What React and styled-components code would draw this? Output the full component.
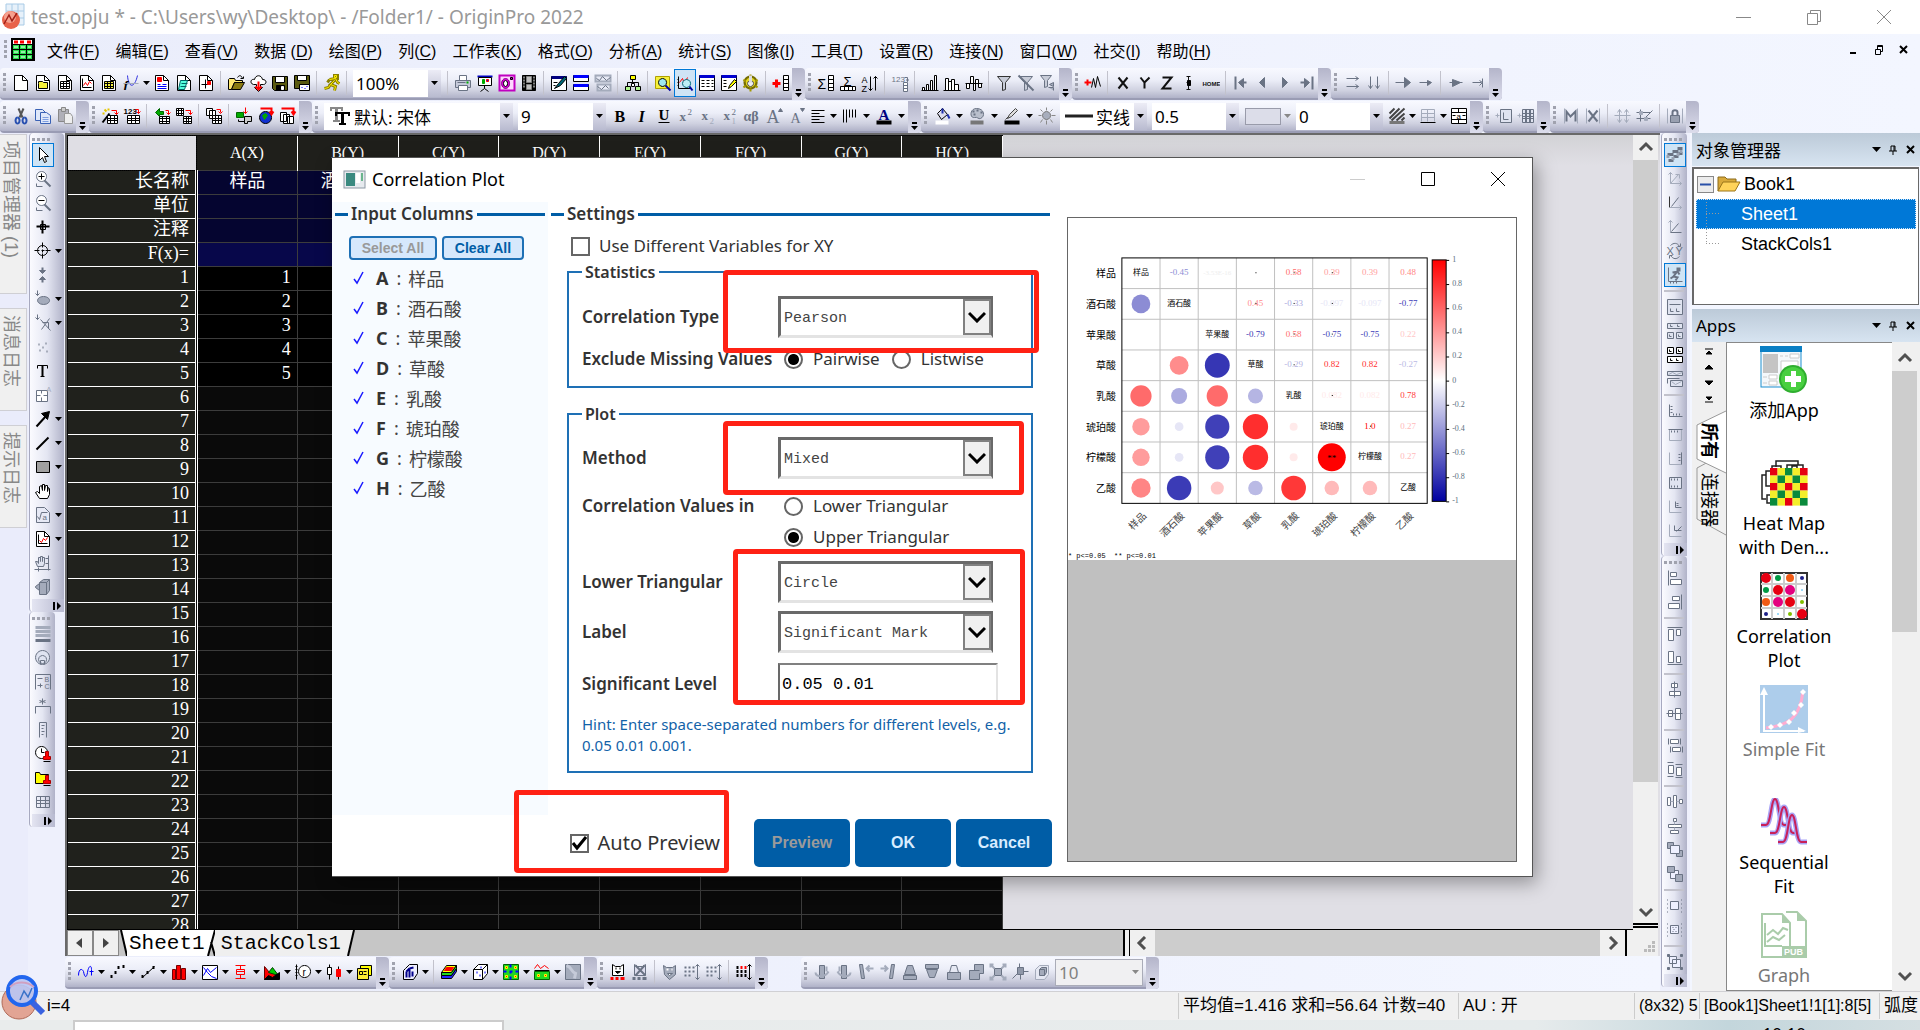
import React, { useState } from 'react';
import styled, { createGlobalStyle, css } from 'styled-components';

const ui = `"Noto Sans", "Noto Sans CJK SC", sans-serif`;
const cjk = `"Liberation Sans", "Noto Sans CJK SC", sans-serif`;
const serif = `"Liberation Serif", "Noto Sans CJK SC", serif`;
const mono = `"Liberation Mono", "Noto Sans CJK SC", monospace`;

const K = '#000';
const W = '#fff';
const G = '#6a7384';
const L = '#a4abbb';
const R = '#f00';
const B = '#00f';
const Y = '#f5f03a';
const N = 'none';

// every entry is [path, fill, stroke, stroke width] or ['text', string, x, y, size, fill, weight, style, family]
const page = ['M2 1H10L15 6V16H2Z', W, K];
const fold = ['M10 1V6H15', N, K];
const pageG = ['M2 1H10L15 6V16H2Z', '#e6e9f5', G];
const grid = (x, y, w, h, fill = W, stroke = K) => [
  `M${x} ${y}h${w}v${h}h-${w}zM${x} ${y + Math.round(h / 3)}h${w}M${x} ${y + Math.round((2 * h) / 3)}h${w}M${x + Math.round(w / 3)} ${y}v${h}M${x + Math.round((2 * w) / 3)} ${y}v${h}`,
  fill,
  stroke,
];

const icons = {
  blank: [page, fold],
  docFolder: [page, fold, ['M4 9V14H13V8H9L8 7H4Z', Y, K]],
  docGrid: [page, fold, grid(4, 7, 9, 7)],
  docPlot: [page, fold, ['M4 4V13H13', N, K], ['M5 11L7 8L9 11L11 7L13 9', N, R]],
  docMatrix: [page, fold, grid(4, 7, 9, 7, Y)],
  func: [['M5 1C6 14 12 14 15 1', N, '#3030e0'], ['text', 'f', 1, 15, 13, K, 700, 'italic'], ['M1 9h15', N, L]],
  docText: [page, fold, ['M4 3h4v4h-4z', R, R], ['M4 10h3M9 10h4M4 12h9M4 14h9', N, B]],
  docLayers: [page, fold, ['M5 6h7l-3 9h-6z', '#5fd', '#066'], ['M6 9h6M5 12h6', N, '#066']],
  docMark: [page, fold, ['M8 5v9M4 10h9', N, K], ['M10 7h3v3h-3z', R, R]],
  open: [['M1 5V15H4L7 8H15V6H8L7 4H2Z', '#ffe870', K], ['M4 15H13L17 8H7Z', '#8a7a10', K], ['M10 3C12 0 14 1 15 4M13 4h3v-2', N, K]],
  cloud: [['M4 10C0 9 1 4 5 5C6 0 12 0 13 5C18 5 17 10 14 10H11V13H13L9 17L5 13H7V10Z', W, K], ['M9 7V15M6 12L9 15L12 12', N, R, 2]],
  save: [['M1 2H16V16H3L1 14Z', '#5a5a10', K], ['M4 2H13V8H4Z', W, K], ['M5 11H13V16H5Z', K, K], ['M10 12h2v3h-2z', W, W]],
  saveAs: [['M1 1H16V12H13V14H1Z', '#5a5a10', K], ['M4 1H13V6H4Z', W, K], ['M6 10H16V16H6Z', W, K], ['M8 13h1M11 14h1M13 12h1', N, B]],
  runner: [['M11 1h3v3h-3zM6 5L12 4L14 8L16 9M11 6L7 10L12 12L11 16M7 10L5 13L1 14M6 5L4 8', N, '#8a8000', 3], ['M11 1h2v2h-2zM6 5L12 4L14 8L16 9M11 6L7 10L12 12L11 16M7 10L5 13L1 14', N, '#ffee00', 1]],
  print: [['M5 6V1H12V6', W, G], ['M1 6H16V13H1Z', '#c6cada', G], ['M4 11H13V16H4Z', W, G], ['M3 8h8', N, G], ['M12 8h2', N, '#0a0', 2]],
  board: [['M1 2H16', N, '#0000c0', 2], ['M2 3H15V11H2Z', W, K], ['M8 11V14L4 17M8 14L12 17', N, K], ['M6 5h2v4h-2z', '#0a0', '#0a0'], ['M10 5h2v2h-2z', B, R]],
  cam: [['M1 1H16V16H1Z', '#ffd6ff', '#c000c0', 2], ['M7 4a4 5 0 1 0 .1 0', '#e000e0', '#800080'], ['M7 6a2 3 0 1 0 .1 0', '#fff', K], ['M12 3h2v2h-2z', '#c000c0', K]],
  film: [['M2 1H15V16H2Z', K, K], ['M6 2h5v6h-5zM6 10h5v5h-5z', '#c0c0c0', '#808080'], ['M3 3h1M3 6h1M3 9h1M3 12h1M13 3h1M13 6h1M13 9h1M13 12h1', N, W, 2]],
  edit: [['M1 2H16V16H1Z', W, K], ['M1 3H16', N, '#000080', 3], ['M4 14L8 9L14 2L16 4L10 11Z', '#067', K], ['M3 8h4M3 11h2', N, K]],
  winRows: [['M1 1H16V7H1ZM1 10H16V16H1Z', W, K], ['M1 2H16M1 11H16', N, B, 3]],
  winWave: [['M1 1H16V7H1ZM3 10H16V16H3Z', '#e6e9f5', L, 2], ['M2 4L5 6L8 2L12 6L16 3M3 12L7 15L11 11L14 14', N, G]],
  org: [['M6 1H11V5H6Z', '#ff0', K], ['M8 5V8M3 12V8H14V12', N, K], ['M1 12H6V16H1ZM11 12H16V16H11Z', '#aef58a', K], ['M7 9h3v3h-3z', W, K]],
  find: [['M1 2H15V14H1Z', Y, '#b0a000'], ['M8 4a4 4 0 1 0 .1 0', '#9fe8f0', K], ['M11 11L16 16', N, '#0000a0', 2]],
  findPlot: [['M2 2V14H15M1 5h1M1 8h1M1 11h1', N, K], ['M3 8L6 4L8 9L11 3', N, R], ['M10 5a4 4 0 1 0 .1 0', '#bdeef5', '#067'], ['M13 12L16 16', N, '#0000a0', 2]],
  table: [['M1 1H16V16H1Z', W, K], ['M1 2H16', N, '#0000d0', 3], ['M3 6h3M8 6h3M13 6h2M3 9h3M8 9h3M13 9h2M3 12h3M8 12h3M13 12h2', N, K]],
  tableEdit: [['M1 1H16V16H1Z', W, K], ['M1 2H16', N, '#0000d0', 3], ['M3 6h3M3 9h3M3 12h3', N, K], ['M8 14L9 11L14 5L16 7L11 12Z', '#ff0', K]],
  gear: [['M8 2a6 6 0 1 0 .1 0', '#e2d520', '#756c00', 2], ['M8 6a3 3 0 1 0 .1 0', '#eee', '#555'], ['M8 0v3M1 5l2 2M15 5l-2 2M1 13l2-2M15 13l-2-2M8 14v3', N, '#a39800', 2], ['M8 1v7', N, '#ddd', 3]],
  addCol: [['M0 9H8M4 5V13', N, R, 3], ['M11 1H16V16H11ZM11 5H16M11 9H16M11 13H16', W, K]],
  sumCol: [['text', 'Σ', 0, 14, 14, K, 400], ['M11 1H16V16H11ZM11 5H16M11 9H16M11 13H16', W, K]],
  sumRow: [['text', 'Σ', 4, 11, 13, K, 400], ['M1 12H16V16H1ZM5 12V16M9 12V16M13 12V16', W, K]],
  sortAZ: [['text', 'A', 0, 8, 9, K, 400], ['text', 'Z', 0, 17, 9, K, 400], ['M9 2V16M7 14L9 16L11 14M14 16V2M12 4L14 2L16 4', N, K]],
  num: [['text', '123', 0, 7, 8, G, 400], ['M12 8H16V17H12ZM12 11H16M12 14H16', W, G], ['M13 3h3v4M15 5l1 2l1-2', N, G]],
  bars1: [['M1 13V16H3V13ZM5 10V16H7V10ZM9 6V16H11V6ZM13 1V16H15V1Z', W, K], ['M0 16H17', N, K]],
  bars2: [['M2 4V16H5V4ZM5 7V16H8V7ZM8 5V16H11V5ZM11 10V16H15V10Z', W, K], ['M0 16H17', N, K]],
  bars3: [['M1 9V14H4V9ZM5 2V9H8V2ZM8 9V16H10V9ZM10 5V9H13V5ZM13 9V13H16V9Z', W, K], ['M0 9H17', N, K]],
  filter: [['M2 2H15L10 8V15L7 16V8Z', '#c8ccd8', '#333']],
  filterOff: [['M2 2H15L10 8V15L7 16V8Z', '#c8ccd8', G], ['M1 1L16 16', N, G, 2]],
  filterRe: [['M1 1H12L8 6V12L5 13V6Z', '#c8ccd8', G], ['M10 10L14 8V12ZM9 13h5v3', L, G]],
  plusWave: [['M0 8H7M3 5V11', N, R, 2], ['M7 13L9 4L11 13L13 2L16 12', N, K]],
  axX: [['M4 3L13 14M13 3L4 14', N, '#111', 2]],
  axY: [['M4 3L8 8L13 3M8 8V14', N, '#111', 2]],
  axZ: [['M4 3H13L4 14H13', N, '#111', 2]],
  ibeam: [['M8 2V15M6 2h4M6 15h4M6 8h4', N, '#111'], ['M7 6h3v5h-3z', K, K]],
  home: [['text', 'HOME', 0, 11, 6, '#111', 700]],
  first: [['M3 2V15', N, G, 2], ['M11 4L6 8L11 13Z', G, G], ['M9 8h5', N, G, 2]],
  prev: [['M10 3L5 8L10 13Z', G, G]],
  next: [['M6 3L11 8L6 13Z', G, G]],
  last: [['M14 2V15', N, G, 2], ['M6 4L11 8L6 13Z', G, G], ['M2 8h5', N, G, 2]],
  arrRR: [['M3 4H15M12 2L15 4L12 6M3 12H15M12 10L15 12L12 14', N, G]],
  arrDD: [['M5 2V14M3 11L5 14L7 11M12 2V14M10 11L12 14L14 11', N, G]],
  arrBig: [['M0 8H10', N, G], ['M9 3L15 8L9 13Z', G, G]],
  arrMid: [['M2 8H11', N, G], ['M10 6L14 8L10 11Z', G, G]],
  arrFat: [['M2 8H15', N, G], ['M5 5L13 8L5 12Z', G, G]],
  arrEnd: [['M3 8H12M13 4V13M10 6L13 8L10 11', N, G]],

  cut: [['M6 1L10 10M11 1L7 10', N, '#555', 2], ['M5 10a2 3 0 1 0 .1 0M12 10a2 3 0 1 0 .1 0', N, '#2850b0', 2]],
  copy: [['M1 2H8L11 5V13H1Z', '#dfe8fa', '#3a62b5'], ['M6 5H12L16 8V16H6Z', '#dfe8fa', '#3a62b5'], ['M8 10h6M8 12h6M8 14h6', N, '#7f9fe0']],
  paste: [['M2 2H12V14H2Z', '#b0b0b8', '#888'], ['M5 0H9V4H5Z', '#ccc', '#888'], ['M8 6H14L16 9V16H8Z', '#eee', '#999']],
  wand: [['M1 15L8 6', N, K, 2], ['M3 2l2 2M7 1v2M1 6h2', N, '#e8c800', 2], ['M10 3h5v4M13 5l2 2l2-2', N, R], grid(6, 8, 10, 8)],
  imp123: [['text', '123', 0, 6, 8, K, 700], ['M12 2h3v4M13 4l2 2l2-2', N, R], grid(4, 8, 12, 8)],
  reimp: [['M2 5L6 1V4H10V7H6V9Z', '#0a0', '#060'], ['M12 3h3v4M13 5l2 2l2-2', N, R], grid(6, 9, 10, 7)],
  clone: [grid(1, 1, 7, 7), ['M10 3h5v4M13 5l2 2l2-2', N, R], grid(8, 9, 8, 7)],
  batch: [['M1 1H7V8H1ZM4 3H10V11H4Z', W, K], ['M11 2h4v3M13 4l2 2l2-2', N, R], grid(7, 8, 9, 8)],
  connect: [['M1 5H8V10H1Z', '#0a0', '#060'], ['M10 0V6M8 4L10 6L12 4', N, R], ['M3 12V14H9', N, K], ['M9 9H16V14H12V16H9Z', '#ccc', K]],
  globe: [['M8 4a6 6 0 1 0 .1 0', '#1030d0', K], ['M5 8L8 6L10 8L7 12Z', '#0a0', '#0a0'], ['M3 1H14V6M12 4L14 7L16 4', N, R, 2]],
  export: [['M1 5H7V14H1ZM4 7H10V16H4ZM8 9H14V16H8Z', W, K], ['M2 1H14V6M12 4L14 7L16 4', N, R, 2]],
  bold: [['text', 'B', 3, 14, 16, K, 700, 'normal', serif]],
  italic: [['text', 'I', 5, 14, 16, K, 700, 'italic', serif]],
  under: [['text', 'U', 3, 12, 15, K, 700, 'normal', serif], ['M3 15H14', N, K]],
  sup: [['text', 'x', 2, 13, 13, G, 700, 'normal', serif], ['text', '2', 10, 7, 9, G, 400, 'normal', serif]],
  sub: [['text', 'x', 2, 12, 13, G, 700, 'normal', serif], ['text', '2', 10, 16, 9, L, 400, 'normal', serif]],
  supsub: [['text', 'x', 2, 12, 13, G, 700, 'normal', serif], ['text', '2', 10, 7, 9, G, 400, 'normal', serif], ['text', '1', 10, 16, 9, L, 400, 'normal', serif]],
  greek: [['text', 'αβ', 0, 13, 14, G, 700, 'normal', serif]],
  grow: [['text', 'A', 1, 15, 18, G, 400, 'normal', serif], ['M13 4L15 1L17 4Z', G, G]],
  shrink: [['text', 'A', 3, 15, 14, G, 400, 'normal', serif], ['M13 1L15 4L17 1Z', G, G]],
  align: [['M2 3H15M2 6H10M2 9H15M2 12H10M2 15H15', N, K]],
  vlines: [['M3 2V15M6 2V15M9 2V10M12 2V10M15 2V10', N, K]],
  fontColor: [['text', 'A', 3, 12, 15, '#000080', 700, 'normal', serif], ['M1 15H16', N, K, 4]],
  bucket: [['M4 6L9 1L14 7L8 12Z', '#dde', K], ['M9 1V6M14 7L16 11', N, '#2030b0', 2], ['M2 15H15', N, W, 4]],
  palette: [['M8 1C1 1 1 11 6 10C9 9 10 12 12 11C17 9 16 1 8 1Z', '#b9bfcc', G], ['M4 4h2M8 3h2M12 5h2M5 7h2', N, G, 2], ['M2 15H15', N, '#777', 4]],
  pen: [['M4 11L6 7L12 1L14 3L8 9ZM2 12L5 9', '#ddd', '#444'], ['M1 15H16', N, K, 4]],
  sun: [['M8 4a4 4 0 1 0 .1 0', '#a8aebd', '#777'], ['M8 0V3M2 2L4 4M14 2L12 4M0 8H3M13 8H17M2 15L4 12M14 15L12 12M8 13V17', N, '#888']],
  hatch: [['M1 6L6 1M1 11L11 1M3 13L16 1M8 13L16 6M13 13L16 10', N, '#444', 2], ['M1 15H16', N, '#777', 3]],
  borders: [['M2 2H15M2 6H15M2 10H15M2 2V14M8 2V14M15 2V14', N, L], ['M1 15H16', N, K]],
  merge: [['M1 1H16V16H1ZM1 5H16M1 12H16M8 1V5M8 12V16', W, K], ['text', 'a', 6, 11, 8, K, 400], ['M2 8h3M12 8h3', N, K]],
  addLayer: [['M0 8h4M2 6v4', N, L], ['M5 2H16V15H5Z', '#dfe3f0', G], ['M8 5V12H13', N, G]],
  addGrid: [['M0 8h4M2 6v4', N, L], grid(5, 2, 11, 13, '#dfe3f0', G), ['M5 9h11M8 2v13M13 2v13', N, G]],
  mask: [['M2 1V16M15 1V16', N, L], ['M4 14V4L8 9L13 4V14', N, G, 2]],
  maskX: [['M2 1V16M15 1V16', N, L], ['M4 3L13 14M13 3L4 14', N, G, 2]],
  spread: [['M5 2V15M3 5L5 2L7 5M3 12L5 15L7 12M12 2V15M10 5L12 2L14 5M10 12L12 15L14 12M0 8H16', N, L]],
  cross: [['M0 5H14M0 11H14M4 2V14M9 10L16 3', N, G], ['M3 4h3v3h-3zM8 10h3v3h-3z', L, L]],
  lock: [['M1 1V16M16 1V16', N, L], ['M4 8H13V15H4Z', '#99a0b0', G], ['M6 8V5C6 2 11 2 11 5V8', N, G, 2]],

  pointer: [['M5 1V14L8 11L10 16L12 15L10 10H14Z', W, K]],
  zoomIn: [['M7 1a5 5 0 1 0 .1 0', W, G], ['M4 6H10M7 3V9', N, K], ['M10 10L16 16', N, G, 2], ['M2 13v3h6', N, G]],
  zoomOut: [['M7 1a5 5 0 1 0 .1 0', W, G], ['M4 6H10', N, K], ['M10 10L16 16', N, G, 2], ['M2 13v3h6', N, G]],
  reader: [['M8 2V15M2 8H15', N, K, 2], ['M6 6h5v5h-5z', N, K]],
  target: [['M8 3a5 5 0 1 0 .1 0', N, K], ['M8 0V5M8 11V16M0 8H5M11 8H16M8 7v3M7 8h3', N, K]],
  pinch: [['M8 1V6M8 16V11', N, G, 2], ['M5 4H11L8 7ZM5 13H11L8 10Z', G, G]],
  maskPts: [['M3 0V5M1 3L3 5L5 3', N, G], ['M9 6a6 4 0 1 0 .1 0', L, G]],
  regional: [['M3 0V5M1 3L3 5L5 3M6 5L16 16M15 4L7 15M8 8H14V14', N, G]],
  dots: [['M4 6h1M11 5h1M8 9h1M5 12h1M12 13h1', N, G, 2]],
  text: [['M3 3H13M3 3V6M13 3V6M6 14H10', N, K], ['M8 3V14', N, K, 2]],
  annot: [['M2 4H13V15H2ZM2 9H6M9 9H13M7 4V7M7 11V15', W, G], ['text', 'A', 12, 5, 7, L, 400]],
  arrow: [['M2 16L12 5', N, K, 2], ['M7 3L15 1L13 9Z', K, K]],
  line: [['M2 15L14 3', N, K, 2]],
  rect: [['M2 3H15V14H2Z', '#a0a0a0', K]],
  hand: [['M5 16L1 10L3 9L5 11V4L7 3L8 8V2L10 2V8L11 3H13V9L14 5L15 6V12L13 16Z', W, K]],
  formula: [pageG, ['M3 10L5 13L7 6H13', N, G], ['text', 'a', 8, 13, 8, G, 400]],
  plotDoc: [page, fold, ['M4 4V13H13', N, K], ['M5 10L7 12L9 8L11 10L13 7', N, R]],
  handAx: [['M3 12L1 7L3 7L4 9V3H6V7V2H8V7V3H10V9L9 12Z', '#dfe3f0', G], ['M0 15H16M14 1V16M11 4h3M11 9h3M4 13v4', N, G]],
  cube: [['M5 4L9 1H15V12L12 16H5Z', L, G], ['M5 4H12V16M12 4L15 1M1 8L5 5V12L1 9Z', L, G]],
  bars: [['M1 2H16M1 6H16M1 10H16', N, L, 3], ['M1 15H16', N, G, 3]],
  rings: [['M8 1a7 7 0 1 0 .1 0M8 6a4 4 0 1 0 .1 0', '#dfe3f0', G], ['M6 15V11H10V15', N, G]],
  legend: [['M1 1H16V16M1 1V16', N, G], ['M3 5H8M3 12H8M6 10v4', N, G], ['text', 'B', 10, 8, 7, G, 400], ['text', 'C', 10, 15, 7, G, 400]],
  starBox: [['M1 16V9H16V16', N, G], ['M8 1V7M5 3L11 5M11 3L5 5', N, G]],
  scale: [['M5 1H12V16M5 1V16', N, G], ['M7 4h3M7 7h2M7 10h3M7 13h2', N, G]],
  clock: [['M7 1a6 6 0 1 0 .1 0', W, K], ['M7 3V7H10', N, K], ['M11 6H14V11H16V14H9V11H11Z', R, '#a00'], ['M9 16h7', N, K]],
  folderStamp: [['M1 3H5L6 5H14V14H1Z', '#ff0', K], ['M11 6H14V11H16V14H9V11H11Z', R, '#a00'], ['M9 16h7', N, K]],
  gridG: [grid(2, 3, 13, 11, N, G)],

  zigzag: [['M11 2H16M6 5H12M1 8H7', N, G, 3], ['M12 7H16M7 10H12M2 14H7', N, G, 3], ['M13 5h3M10 8h3M5 12h3M0 10h3', N, '#9aa3b4', 3]],
  axes3d: [['M4 2V13H15M2 4L4 2L6 4M13 11L15 13L13 15M4 13L12 4M9 4H13V8', N, L]],
  axesXY: [['M3 2V13', N, '#333'], ['M3 13H15M13 11L15 13L13 15', N, L], ['M5 12L12 3', N, G]],
  axesYX: [['M4 2V14M2 4L4 2L6 4', N, L], ['M4 14H15M5 13L12 5', N, G]],
  swapXY: [['text', 'X', 0, 12, 11, G, 400], ['text', 'Y', 9, 12, 11, G, 400], ['M4 3C7 0 11 0 13 4M14 1V4H11M13 14C10 17 7 17 4 13M3 16V13H6', N, G]],
  sprint: [['M2 1V15H16M4 15v2M7 15v2M10 15v2', N, G], ['M11 2h2v2h-2zM6 6L11 5L13 8M10 6L7 10L11 11L9 14M7 10L4 12', N, G, 2]],
  lay1: [['M1 1H16V16H1Z', '#dfe3f0', G], ['M3 6H14M4 10v3h3M10 10v3h3', N, G]],
  lay2: [['M1 1H16V6H1ZM1 10H7V16H1ZM10 10H16V16H10Z', '#dfe3f0', G], ['M4 2v2h2M11 2v2h2M3 12v2h2M12 12v2h2', N, G]],
  lay3: [['M1 1H7V7H1ZM10 1H16V7H10ZM1 10H16V16H1Z', W, K], ['M3 3v2h2M12 3v2h2M4 12v2h2M10 12v2h2', N, K]],
  lay4: [['M1 1H16V5H1ZM4 10H16V16H4ZM1 8H13M1 8V13', '#dfe3f0', G], ['M2 4L6 2L10 4L16 2M5 11L9 14L15 11', N, L]],
  axL: [['M3 2V14H16', N, G], ['M4 4h2M4 7h2M4 10h2M7 13v-2M10 13v-2M13 13v-2', N, G]],
  axT: [['M3 3V14H15V3', N, L], ['M2 3H16M5 4v2M8 4v2M11 4v2', N, G]],
  axR: [['M15 2V14H3V2', N, L], ['M15 2V14M14 4h-2M14 7h-2M14 10h-2', N, G]],
  axB: [['M3 3H15V14H3Z', '#dfe3f0', G], ['M5 4v2M8 4v2M11 4v2M5 13v-2M8 13v-2M11 13v-2', N, G]],
  axI: [['M3 2V14H15', N, L], ['M9 3V9H15M10 5h2M10 7h2', N, G]],
  axJ: [['M3 2V14H15', N, L], ['M8 3V8H15M10 9L15 4', N, G]],
  alL: [['M2 1V16', N, G], ['M4 3H10V7H4ZM4 10H15V15H4Z', W, G]],
  alR: [['M15 1V16', N, G], ['M6 3H13V7H6ZM2 10H13V15H2Z', W, G]],
  alT: [['M1 2H16', N, G], ['M2 4H7V15H2ZM10 4H14V10H10Z', W, G]],
  alB: [['M1 15H16', N, G], ['M2 2H7V13H2ZM10 7H14V13H10Z', W, G]],
  alC: [['M5 2H11V6H5ZM3 10H14V14H3Z', W, G], ['M8 0V16', N, G]],
  alM: [['M2 5H6V11H2ZM9 3H14V14H9Z', W, G], ['M0 8H16', N, G]],
  szW: [['M4 2H12V6H4ZM6 10H14V14H6Z', W, G], ['M2 1V7M14 1V7M4 9V15M16 9V15', N, G]],
  szH: [['M2 4H7V12H2ZM10 6H15V14H10Z', W, G], ['M1 1H7M1 15H7M9 3H16M9 16H16', N, G]],
  dsH: [['M1 4H4V12H1ZM7 2H10V14H7ZM13 6H16V10H13Z', W, G], ['M4 8h3M10 8h3', N, L]],
  dsV: [['M7 1H10V4H7ZM2 7H15V10H2ZM4 13H12V16H4Z', W, G], ['M8 4v3M8 10v3', N, L]],
  toFront: [['M1 1H7V7H1ZM10 9H16V15H10Z', L, G], ['M4 4H13V12H4Z', '#eef0ff', G]],
  toBack: [['M4 5H12V13H4Z', '#eef0ff', G], ['M1 1H8V7H1ZM9 9H16V16H9Z', L, G]],
  unit: [['M4 4H12V12H4Z', '#eef0ff', G], ['M1 2v1M1 6v1M1 10v1M1 14v1M15 2v1M15 6v1M15 10v1M15 14v1', N, G]],
  unitF: [['M4 4H12V12H4Z', '#eef0ff', G], ['M6 6h1M9 6h1M7 8h1M6 10h1M9 10h1M1 2v1M1 6v1M1 10v1M1 14v1M15 2v1M15 6v1M15 10v1M15 14v1', N, G]],
  group: [['M3 3H10V10H3ZM6 6H14V14H6Z', '#eef0ff', G], ['M1 1h2v2h-2zM14 1h2v2h-2zM1 14h2v2h-2zM14 14h2v2h-2z', G, G]],

  pLine: [['M1 12C1 6 4 4 6 8C7 14 9 15 10 9C11 2 14 1 14 6V12M12 8H16', N, B]],
  pScat: [['M2 13h2M6 9h2M9 4h2M14 3h2', N, K, 3]],
  pLS: [['M3 14L15 3', N, K], ['M2 13h2M7 9h2M13 4h2', N, K, 3]],
  pCol: [['M2 6H5V16H2ZM6 2H10V16H6ZM11 5H15V16H11Z', R, '#700']],
  pMulti: [['M1 2H16V16H1Z', W, K], ['M2 12L6 5L9 9L15 4M2 4L6 9L10 13L15 15', N, B]],
  pStat: [['M3 2H13M8 2V6M4 6H12V11H4ZM4 8H12M8 11V15M3 15H13', N, R]],
  pArea: [['M1 3L6 9L9 7L15 12V16H1Z', R, '#600'], ['M5 9L9 4L15 12Z', '#0c0', '#040'], ['M1 16L5 12L9 14L16 9V16Z', K, K]],
  pPolar: [['M2 1V16M1 3h2M1 6h2M1 9h2M1 12h2', N, K], ['M10 2a6 6 0 1 0 .1 0', W, K], ['text', 'r', 8, 12, 10, K, 400]],
  pStock: [['M4 1V16M13 3V16', N, K], ['M2 4H6V11H2Z', W, K], ['M11 6H15V13H11Z', R, R]],
  pTmpl: [['M4 2H15V12H4Z', '#ff0', K], ['M1 5H12V16H1Z', '#fe3', K], ['M3 8h3v3h-3zM7 11h3M7 8h3', N, K]],
  p3dBar: [['M4 5L8 1H16V10L12 16H2V7Z', '#eef', K], ['M5 8V14M8 5V14M11 8V13M5 8L8 5M8 5L12 4', N, '#00008b', 2]],
  p3dSurf: [['M1 9L6 2H16L11 9Z', '#ff0', K], ['M6 4H13L11 7H4Z', R, R], ['M1 9V12L11 12L16 5V2L11 9Z', '#20d820', K], ['M1 12V15H11L16 8V5L11 12Z', '#22f', K]],
  p3dScat: [['M2 6L7 1H16V10L11 16H2Z', W, K], ['M2 6H11V16M11 6L16 1', N, K], ['M5 9h1M8 12h1M9 4h1M13 9h1', N, B, 2]],
  pContour: [['M1 1H16V16H1Z', '#20d820', '#060'], ['M3 3h2v2h-2zM12 3h2v2h-2zM3 12h2v2h-2zM12 12h2v2h-2z', R, '#ff0'], ['M7 8h3M8 7v3M8 1v3M8 13v3M1 8h3M13 8h3', N, B, 2]],
  pProf: [['M1 8H16V16H1Z', '#20d820', '#060'], ['M1 5L4 1L7 5L11 2L15 5', N, R], ['M1 7H16', N, K], ['M4 11h2v2h-2zM11 11h2v2h-2z', R, '#ff0']],
  pImage: [['M1 1H16V16H1Z', L, G], ['M2 2C8 4 6 8 11 10L10 15', N, '#c5cad8', 3]],
  bear: [['M3 1L6 3H11L14 1V12H3Z', W, K], ['M6 5h1M10 5h1', N, K, 2], ['M6 8L8 10L11 8Z', K, K], ['M1 15h3M6 15h3M11 15h4', N, R, 3]],
  bearX: [['M3 1L6 3H11L14 1V12H3Z', '#dde', G], ['M4 2L14 12M13 2L4 12', N, G, 2], ['M1 15h3M6 15h3M11 15h4', N, G, 3]],
  bearG: [['M2 2L5 4H11L14 2V11L8 16L3 11Z', L, G], ['M5 6h2M10 6h1', N, W, 2], ['M6 10L8 12L11 10Z', W, G]],
  cells: [['M1 4h2M5 4h2M9 4h2M1 8h2M5 8h2M9 8h2M1 12h2M5 12h2', N, G, 2], ['M14 1V16M12 3L14 1L16 3M12 14L14 16L16 14', N, G]],
  cellsR: [['M1 4h2M1 8h2M5 8h2M9 8h2M1 12h2M5 12h2M9 12h2', N, K, 3], ['M5 4h2M9 4h2', N, R, 3], ['M14 1V16M12 3L14 1L16 3M12 14L14 16L16 14', N, K]],
  rotL: [['M6 2H11V15H6Z', L, G], ['M2 9C2 14 12 14 15 8M13 3V8', N, L, 2]],
  rotR: [['M6 2H11V15H6Z', L, G], ['M15 9C15 14 5 14 2 8M4 3V8', N, L, 2]],
  tiltL: [['M2 1H5L7 15H4Z', L, G], ['M16 5H9M12 2L9 5L12 8', N, L, 2]],
  tiltR: [['M15 1H12L10 15H13Z', L, G], ['M1 5H8M5 2L8 5L5 8', N, L, 2]],
  persU: [['M6 2H11L14 11H3Z', L, G], ['M2 12H15V16H2Z', L, G]],
  persD: [['M2 1H15V5H2Z', L, G], ['M3 6H14L11 14H6Z', L, G]],
  stretch: [['M6 2H11L13 9H4Z', '#e5e8f3', G], ['M2 9H15V16H2Z', L, G]],
  boxes: [['M7 1H16V10H12V16H2V7H7Z', L, G], ['M2 7H12', N, G]],
  fit: [['M5 5H12V12H5Z', L, G], ['M1 1L5 5M16 1L12 5M1 16L5 12M16 16L12 12M1 4V1H4M13 1H16V4M1 13V16H4M13 16H16V13', N, L, 2]],
  ax3: [['M6 4H12V11H6Z', '#8f97a8', G], ['M1 15L6 10M8 0V4M12 8H17M9 11V16', N, G]],
  cube2: [['M2 6L6 2H15V11L11 16H2Z', '#e5e8f3', L], ['M6 6H11V12H6ZM6 6L8 4H13V9L11 12', L, G]],
};

const Svg = styled.svg`
  display: block;
  flex: none;
`;

const Icon = ({ name }) => (
  <Svg width="18" height="18" viewBox="0 0 18 18" aria-hidden="true">
    <g transform="translate(.5 .5)">
      {icons[name].map((s, i) =>
        s[0] === 'text' ? (
          <text key={i} x={s[2]} y={s[3]} fontSize={s[4]} fill={s[5]} fontWeight={s[6]} fontStyle={s[7]} fontFamily={s[8] || 'Liberation Sans'}>
            {s[1]}
          </text>
        ) : (
          <path key={i} d={s[0]} fill={s[1]} stroke={s[2]} strokeWidth={s[3] || 1} />
        )
      )}
    </g>
  </Svg>
);

const GlobalStyle = createGlobalStyle`
  * { box-sizing: border-box; }
  body { margin: 0; font-family: ${ui}; color: #000; background: #eaecfb; }
  button, input, select { font: inherit; color: inherit; }
  button { border: 0; padding: 0; background: none; }
`;

const Screen = styled.div`
  position: relative;
  height: 100vh;
  display: flex;
  flex-direction: column;
  overflow: hidden;
`;

/* ---- title and menu ---- */

const TitleBar = styled.header`
  flex: none;
  display: flex;
  align-items: center;
  height: 34px;
  padding: 0 28px 0 1px;
  gap: 6px;
  background: #fff;
  color: #999;
  font-size: 19px;
`;

const WindowButtons = styled.div`
  display: flex;
  gap: ${(p) => p.$gap}px;
  margin-left: auto;
  button { display: flex; }
`;

const MenuBar = styled.nav`
  flex: none;
  display: flex;
  align-items: center;
  height: 33px;
  padding: 0 12px 2px 4px;
  background: linear-gradient(90deg, #eaedfb, #f3f6ff);
`;

const MenuItem = styled.button`
  margin-left: ${(p) => p.$gap}px;
  font: 16px ${cjk};
  white-space: nowrap;
  u { text-underline-offset: 2px; }
`;

const menus = [['文件', 'F'], ['编辑', 'E'], ['查看', 'V'], ['数据 ', 'D'], ['绘图', 'P'], ['列', 'C'], ['工作表', 'K'], ['格式', 'O'], ['分析', 'A'], ['统计', 'S'], ['图像', 'I'], ['工具', 'T'], ['设置', 'R'], ['连接', 'N'], ['窗口', 'W'], ['社交', 'I'], ['帮助', 'H']];

/* ---- toolbars ---- */

const ToolRow = styled.div`
  flex: none;
  display: flex;
  height: ${(p) => p.$height || 33}px;
  padding-top: 1px;
  background: linear-gradient(90deg, #eaedfb, #f3f6ff);
`;

const Bar = styled.div`
  display: flex;
  align-items: center;
  height: 32px;
  margin-left: ${(p) => p.$gap || 0}px;
  padding-left: 3px;
  border-bottom: 2px solid #9a9cb4;
  border-radius: 4px;
  background: linear-gradient(#f8f9ff 0%, #eceef8 40%, #cfd1e0 75%, #b0b2c8 100%);
`;

const Grip = styled.i`
  flex: none;
  width: ${(p) => (p.$flat ? 18 : 3)}px;
  height: ${(p) => (p.$flat ? 3 : 20)}px;
  margin: ${(p) => (p.$flat ? '5px 0 2px' : '0 4px 0 0')};
  background: repeating-linear-gradient(${(p) => (p.$flat ? 90 : 180)}deg, #a0a2ae 0 3px, transparent 3px 5px);
`;

const Tool = styled.button`
  flex: none;
  display: flex;
  align-items: center;
  justify-content: center;
  width: 22px;
  height: ${(p) => (p.$tall ? 24 : 28)}px;
  ${(p) => p.$on && css`
    background: #cfe4f5;
    border: 1px solid #0078d7;
  `}
`;

const Sep = styled.i`
  flex: none;
  ${(p) => p.$flat
    ? css`width: 20px; height: 2px; margin: 3px 0; background: #c2c2cc;`
    : css`width: 1px; height: 24px; margin: 0 4px 0 3px; background: #c2c2cc;`}
`;

const CaretBox = styled.span`
  flex: none;
  width: ${(p) => p.$width}px;
  display: flex;
  justify-content: center;
`;

const Caret = ({ width = 9, color = K }) => (
  <CaretBox $width={width}>
    <svg width="7" height="4" viewBox="0 0 7 4"><path d="M0 0H7L3.5 4Z" fill={color} /></svg>
  </CaretBox>
);

const End = styled.span`
  align-self: stretch;
  display: flex;
  align-items: flex-end;
  justify-content: center;
  width: 13px;
  margin-bottom: -2px;
  padding-bottom: 3px;
  background: linear-gradient(#b4b5ca, #dcddec);
  border-radius: 0 4px 4px 0;
`;

const More = () => (
  <End>
    <svg width="7" height="8" viewBox="0 0 7 8"><path d="M1 1H6" stroke="#000" strokeWidth="2" /><path d="M0 4H7L3.5 8Z" /></svg>
  </End>
);

const Combo = styled.label`
  flex: none;
  display: flex;
  align-items: stretch;
  width: ${(p) => p.$width}px;
  height: 27px;
  margin: 0 3px 0 2px;
  background: ${(p) => (p.$off ? '#f0f0f2' : '#fff')};
  border: ${(p) => (p.$off ? '1px solid #aaacb8' : 0)};
  color: ${(p) => (p.$off ? '#808080' : '#000')};
  > svg { align-self: center; margin-left: 5px; }
  input {
    flex: 1;
    min-width: 0;
    border: 0;
    padding: 0 3px;
    background: none;
    font: 17px ${ui};
  }
`;

const ComboArrow = styled.span`
  display: flex;
  align-items: center;
  width: 13px;
  background: ${(p) => (p.$off ? 'none' : 'linear-gradient(#ececf6, #b9bbd0)')};
  justify-content: center;
`;

const Swatch = styled.i`
  width: 36px;
  height: 17px;
  margin-left: 3px;
  border: 1px solid #999baa;
  background: #dcdde9;
`;

// '|' separator, trailing 'v' / 'w' narrow or wide drop caret, '!' highlighted
const Tools = ({ items, flat }) =>
  items.map((it, i) => {
    if (typeof it !== 'string') return <React.Fragment key={i}>{it}</React.Fragment>;
    if (it === '|') return <Sep key={i} $flat={flat} />;
    const [name, flag] = it.split(':');
    return (
      <React.Fragment key={i}>
        <Tool $tall={flat} $on={flag === '!'} aria-label={name}><Icon name={name} /></Tool>
        {flag === 'v' && <Caret />}
        {flag === 'w' && <Caret width={13} />}
      </React.Fragment>
    );
  });

const ToolBar = ({ items, gap }) => (
  <Bar $gap={gap}>
    <Grip />
    <Tools items={items} />
    <More />
  </Bar>
);

const ComboBox = ({ name, value, width, off, children }) => (
  <Combo $width={width} $off={off}>
    {children}
    <input aria-label={name} defaultValue={value} disabled={off} />
    <ComboArrow $off={off}><Caret width={7} color={off ? '#888' : K} /></ComboArrow>
  </Combo>
);

const row1 = [
  ['blank', 'docFolder', 'docGrid', 'docPlot', 'docMatrix', 'func:v', 'docText', 'docLayers', 'docMark', '|', 'open', 'cloud', 'save', 'saveAs', '|', 'runner', '|',
    <ComboBox name="Zoom" value="100%" width={88} />, '|', 'print', 'board', 'cam', 'film', '|', 'edit', 'winRows', 'winWave', '|', 'org', '|', 'find', 'findPlot:!', 'table', 'tableEdit', 'gear', '|', 'addCol'],
  ['sumCol', 'sumRow', 'sortAZ', '|', 'num', '|', 'bars1', 'bars2', 'bars3', '|', 'filter', 'filterOff', 'filterRe'],
  ['plusWave', '|', 'axX', 'axY', 'axZ', 'ibeam', 'home', '|', 'first', 'prev', 'next', 'last'],
  ['arrRR', 'arrDD', '|', 'arrBig', 'arrMid', '|', 'arrFat', 'arrEnd'],
];

const row2 = [
  ['cut', 'copy', 'paste'],
  ['wand', 'imp123', '|', 'reimp', 'clone', '|', 'batch', '|', 'connect', 'globe', 'export'],
  [<ComboBox name="Font" value="默认: 宋体" width={189}>
    <svg width="22" height="20" viewBox="0 0 22 20"><path d="M1 1H14V5H12V3H9V14H11V16H4V14H6V3H3V5H1Z" fill="#888" /><path d="M6 6H21V10H19V8H15V17H17V19H10V17H12V8H8V10H6Z" /></svg>
  </ComboBox>,
  <ComboBox name="Font size" value="9" width={88} />,
    'bold', 'italic', 'under', 'sup', 'sub', 'supsub', 'greek', 'grow', 'shrink', 'align:v', 'vlines:w', 'fontColor:w'],
  ['bucket:w', 'palette:w', 'pen:w', 'sun',
    <ComboBox name="Line style" value="实线" width={87}>
      <svg width="28" height="4" viewBox="0 0 28 4"><path d="M0 2H28" stroke="#222" strokeWidth="3" /></svg>
    </ComboBox>,
    <ComboBox name="Line width" value="0.5" width={87} />,
    <Swatch />, <Caret width={13} color="#888" />,
    <ComboBox name="Pattern width" value="0" width={87} />, 'hatch:v', 'borders:v', 'merge'],
  ['addLayer', 'addGrid'],
  ['mask', 'maskX', '|', 'spread', 'cross', '|', 'lock'],
];

const bottomRow = [
  ['pLine:v', 'pScat:v', 'pLS:v', 'pCol:v', 'pMulti:v', 'pStat:v', 'pArea:v', 'pPolar:v', 'pStock:v', 'pTmpl'],
  ['p3dBar:v', '|', 'p3dSurf:v', 'p3dScat:v', 'pContour:v', 'pProf:v', 'pImage'],
  ['bear', 'bearX', '|', 'bearG', 'cells', 'cells', '|', 'cellsR'],
  ['rotL', 'rotR', 'tiltL', 'tiltR', 'persU', 'persD', 'stretch', 'boxes', 'fit', 'ax3', 'cube2', <ComboBox name="Step" value="10" width={88} off />],
];

/* ---- side docks ---- */

const Main = styled.main`
  flex: 1;
  min-height: 0;
  display: flex;
`;

const LeftTabs = styled.div`
  flex: none;
  width: 28px;
  display: flex;
  flex-direction: column;
  align-items: flex-start;
  gap: 14px;
  padding-top: 1px;
  background: #eaecfb;
`;

const DockTab = styled.button`
  width: 27px;
  min-height: ${(p) => p.$height || 103}px;
  padding: 6px 0 22px;
  writing-mode: vertical-rl;
  text-orientation: sideways;
  text-align: left;
  background: #f0f0f0;
  border: 1px solid #cfcfd4;
  border-left: 0;
  color: #888;
  font: 18px ${cjk};
  white-space: pre;
`;

const SideBars = styled.div`
  flex: none;
  width: ${(p) => p.$width}px;
  padding: 0 0 0 1px;
  background: #eef0fc;
`;

const SideBar = styled.div`
  display: flex;
  flex-direction: column;
  align-items: flex-start;
  width: ${(p) => p.$width}px;
  padding-left: 2px;
  border-left: 1px solid #a7a9c0;
  border-radius: 4px;
  background: linear-gradient(90deg, #fbfbff 0%, #e4e6f2 50%, #b0b2c8 100%);
`;

const SideTool = styled.div`
  display: flex;
  align-items: center;
`;

const SideEnd = styled.span`
  align-self: stretch;
  display: flex;
  align-items: center;
  justify-content: flex-end;
  height: 13px;
  padding-right: 3px;
  background: linear-gradient(90deg, #e4e5f2, #b8bad0);
`;

const SideTools = ({ items, width }) => (
  <SideBar $width={width}>
    <Grip $flat />
    {items.map((it, i) => <SideTool key={i}><Tools items={[it]} flat /></SideTool>)}
    <SideEnd><svg width="8" height="8" viewBox="0 0 8 8"><path d="M1 0V8" stroke="#000" strokeWidth="2" /><path d="M4 0V8L8 4Z" /></svg></SideEnd>
  </SideBar>
);

const leftTools = [
  ['pointer:!', 'zoomIn', 'zoomOut', 'reader', 'target:v', 'pinch', 'maskPts:v', 'regional:v', 'dots', 'text', 'annot', 'arrow:v', 'line:v', 'rect:v', 'hand', 'formula:v', 'plotDoc:v', 'handAx', 'cube'],
  ['bars', 'rings', 'legend', 'starBox', 'scale', 'clock', 'folderStamp', 'gridG'],
];

const rightTools = [
  ['zigzag:!', 'axes3d', 'axesXY', 'axesYX', 'swapXY', 'sprint:!', '|', 'lay1', 'lay2', 'lay3', 'lay4', '|', 'axL', 'axT', 'axR', 'axB', 'axI', 'axJ'],
  ['alL', 'alR', '|', 'alT', 'alB', '|', 'alC', 'alM', '|', 'szW', 'szH', '|', 'dsH', 'dsV', 'toFront', 'toBack', '|', 'unit', 'unitF', '|', 'group'],
];

/* ---- worksheet ---- */

const Center = styled.div`
  flex: 1;
  min-width: 0;
  display: flex;
  flex-direction: column;
`;

const Workspace = styled.section`
  flex: 1;
  min-height: 0;
  display: flex;
  padding-right: 2px;
  border-top: 2px solid #696969;
  border-left: 2px solid #696969;
  background: linear-gradient(#d2d2d6, #e0dfe5 30px);
`;

const SheetArea = styled.div`
  flex: 1;
  min-width: 0;
  display: flex;
  flex-direction: column;
`;

const SheetView = styled.div`
  flex: 1;
  min-height: 0;
  overflow: hidden;
`;

const Sheet = styled.table`
  table-layout: fixed;
  width: 936px;
  border-collapse: collapse;
  background: #0a0a0a;
  border-right: 1px solid #fff;
  color: #fff;
  font: 18px ${serif};
  th, td { padding: 0 6px; font-weight: 400; height: 24px; line-height: 20px; white-space: nowrap; overflow: hidden; }
  thead th { height: 35px; background: #1f1f1b; border-right: 1px solid #fff; font-size: 16px; }
  thead th:first-child { background: #dfdee4; border: 1px dotted #000; }
  tbody th { text-align: right; background: #20211c; border-bottom: 1px solid #fff; border-right: 3px double #fff; vertical-align: top; }
  td { border: 1px solid #3c3c3c; text-align: right; vertical-align: top; }
`;

const SheetRow = styled.tr`
  td {
    background: ${(p) => p.$bg};
    ${(p) => p.$label && css`text-align: center;`}
  }
`;

const HeadCol = styled.col`
  width: 129px;
`;

const columns = ['A(X)', 'B(Y)', 'C(Y)', 'D(Y)', 'E(Y)', 'F(Y)', 'G(Y)', 'H(Y)'];
const labels = ['样品', '酒石酸', '苹果酸', '草酸', '乳酸', '琥珀酸', '柠檬酸', '乙酸'];
const labelRows = ['长名称', '单位', '注释', 'F(x)='];

const Worksheet = () => (
  <Sheet>
    <colgroup><HeadCol /></colgroup>
    <thead><tr><th />{columns.map((c) => <th key={c}>{c}</th>)}</tr></thead>
    <tbody>
      {labelRows.map((name, r) => (
        <SheetRow key={name} $label $bg={r === 3 ? '#07074a' : '#050530'}>
          <th>{name}</th>
          {labels.map((l, i) => <td key={l}>{r === 0 && i < 2 ? l : ''}</td>)}
        </SheetRow>
      ))}
      {Array.from({ length: 28 }, (_, r) => (
        <SheetRow key={r} $bg={r < 5 ? '#000' : '#0a0a0a'}>
          <th>{r + 1}</th>
          {columns.map((c, i) => <td key={c}>{i === 0 && r < 5 ? r + 1 : ''}</td>)}
        </SheetRow>
      ))}
    </tbody>
  </Sheet>
);

const TabStrip = styled.div`
  flex: none;
  display: flex;
  height: 27px;
  border-top: 1px solid #000;
  background: #f0f0f0;
`;

const Tabs = styled.div`
  flex: 0 0 1058px;
  display: flex;
  align-items: stretch;
  background: #c6c6c6;
  border-right: 2px solid #000;
`;

const NavButton = styled.button`
  width: 26px;
  background: #f0f0f0;
  border: 1px solid #888;
  display: flex;
  align-items: center;
  justify-content: center;
`;

const SheetTab = styled.button`
  padding: 0 ${(p) => (p.$active ? 2 : 6)}px;
  font: ${(p) => (p.$active ? 21 : 20)}px ${mono};
  background: ${(p) => (p.$active ? '#fff' : '#efefef')};
`;

const Slash = ({ d, left, right }) => (
  <Svg width="8" height="26" viewBox="0 0 8 26">
    <rect width="8" height="26" fill="#c6c6c6" />
    {left && <path d={left[0]} fill={left[1]} />}
    {right && <path d={right[0]} fill={right[1]} />}
    <path d={d} fill="none" stroke="#000" strokeWidth="2" />
  </Svg>
);

const HScroll = styled.div`
  flex: 1;
  display: flex;
  align-items: center;
  margin: 0 6px 0 4px;
  border-left: 1px solid #000;
  border-right: 2px solid #000;
`;

const Thumb = styled.i`
  flex: 1;
  align-self: stretch;
  margin-bottom: ${(p) => p.$rest || 0}px;
  background: #cdcdcd;
`;

const ScrollButton = styled.button`
  display: flex;
  align-items: center;
  justify-content: center;
  width: 25px;
  height: 25px;
`;

const VScroll = styled.div`
  flex: none;
  width: 25px;
  display: flex;
  flex-direction: column;
  align-items: center;
  padding: ${(p) => p.$pad || 0}px 0;
  background: #f0f0f0;
`;

const arrows = { up: 'M2 9L8 3L14 9', down: 'M2 5L8 11L14 5', left: 'M10 1L4 7L10 13', right: 'M5 1L11 7L5 13' };
const ScrollArrow = ({ dir }) => (
  <ScrollButton aria-label={dir}>
    <svg width="16" height="14" viewBox="0 0 16 14"><path d={arrows[dir]} fill="none" stroke="#505050" strokeWidth="3" /></svg>
  </ScrollButton>
);

const SizeGrip = styled.div`
  height: 33px;
  width: 25px;
  border-top: 5px double #000;
  display: flex;
  align-items: flex-end;
  justify-content: flex-end;
  padding: 3px;
`;

/* ---- right panels ---- */

const Panels = styled.aside`
  flex: none;
  width: 230px;
  display: flex;
  flex-direction: column;
  padding-left: 2px;
  background: #f3f6ff;
`;

const PanelHead = styled.div`
  flex: none;
  display: flex;
  align-items: center;
  gap: 8px;
  height: 33px;
  padding: 0 5px 0 4px;
  background: linear-gradient(#bccad8, #d7e4f1);
  font: 17px ${ui};
  svg:first-of-type { margin-left: auto; }
`;

const PanelTitle = ({ children }) => (
  <PanelHead>
    {children}
    <svg width="9" height="5" viewBox="0 0 9 5"><path d="M0 0H9L4.5 5Z" /></svg>
    <svg width="9" height="10" viewBox="0 0 9 10"><path d="M2 1V6M2 1H6V6M5 1V6M0 6H8M4 6V10" fill="none" stroke="#000" /></svg>
    <svg width="9" height="9" viewBox="0 0 9 9"><path d="M1 1L8 8M8 1L1 8" fill="none" stroke="#000" strokeWidth="2" /></svg>
  </PanelHead>
);

const Tree = styled.ul`
  flex: none;
  min-height: 138px;
  margin: 1px 1px 4px 0;
  padding: 0 2px;
  list-style: none;
  background: #fff;
  border: 1px solid #696969;
  border-width: 2px 1px 1px 2px;
  font: 18px ${cjk};
`;

const TreeItem = styled.li`
  display: flex;
  align-items: center;
  gap: ${(p) => (p.$root ? 3 : 5)}px;
  height: 30px;
  padding-left: ${(p) => (p.$root ? 1 : 10)}px;
  ${(p) => p.$selected && css`
    background: #0078d7;
    color: #fff;
    outline: 1px dotted #cfe4f7;
    outline-offset: -1px;
  `}
`;

const AppsBody = styled.div`
  flex: 1;
  min-height: 0;
  display: flex;
  padding-right: 3px;
  background: #f0f0f0;
`;

const AppTabs = styled.div`
  flex: none;
  width: 34px;
  display: flex;
  flex-direction: column;
  align-items: flex-end;
`;

const StepButtons = styled.div`
  flex: none;
  display: flex;
  flex-direction: column;
  align-items: center;
  justify-content: space-between;
  height: 63px;
  width: 100%;
  padding: 6px 0 2px;
  svg { display: block; }
`;

const AppTab = styled.button`
  position: relative;
  flex: none;
  width: 30px;
  height: ${(p) => p.$height}px;
  margin-bottom: -20px;
  writing-mode: vertical-rl;
  text-orientation: sideways;
  font: ${(p) => (p.$active ? 700 : 400)} 18px ${cjk};
  z-index: ${(p) => (p.$active ? 1 : 0)};
  svg { position: absolute; inset: 0; z-index: -1; }
`;

const AppList = styled.div`
  flex: 1;
  min-width: 0;
  overflow: hidden;
  background: #fff;
  border: 1px solid #888;
  border-width: 1px 0 1px 1px;
`;

const AppItem = styled.button`
  display: flex;
  flex-direction: column;
  align-items: center;
  justify-content: flex-start;
  width: 114px;
  height: 113px;
  padding-top: 3px;
  font: 18px/24px ${ui};
  color: ${(p) => (p.$off ? '#777' : '#000')};
  svg { margin-bottom: 4px; opacity: ${(p) => (p.$off ? 0.85 : 1)}; flex: none; }
`;

const heat = ['RYGYR', 'YGYGY', 'RYRYR', 'YGYGY', 'GYRYG'];
const heatColor = { R: '#e60012', Y: '#f4ee2b', G: '#0a8a3c' };
const dotRows = [
  [[5, '#e60012'], [3, '#009a44'], [4, '#f05a14'], [2, '#1d2088']],
  [[3, '#009a44'], [5, '#e60012'], [5, '#e4007f'], [1, '#7ecef4']],
  [[4, '#f05a14'], [5, '#e4007f'], [5, '#e60012'], [2, '#80c000']],
  [[2, '#1d2088'], [1, '#7ecef4'], [2, '#80c000'], [5, '#e60012']],
];

const appIcons = {
  add: (
    <>
      <rect x="1" y="1" width="40" height="40" fill="#f4f8fb" stroke="#1c8fd0" />
      <rect x="0" y="0" width="42" height="6" fill="#0a7fc4" />
      <rect x="3" y="8" width="15" height="19" fill="#c4c4c4" />
      <path d="M20 10h3M25 10h3M30 8h9v4h-9zM21 15h17v12h-17zM3 31h4M9 29h8v4h-8zM3 37h4M9 35h8v4h-8z" fill="#fff" stroke="#ccc" />
      <circle cx="33" cy="33" r="14" fill="#2fae2f" />
      <circle cx="33" cy="33" r="12" fill="#48cf40" />
      <path d="M31 25h5v5h5v6h-5v5h-5v-5h-6v-6h6z" fill="#fff" />
    </>
  ),
  heat: (
    <>
      {heat.map((row, y) => row.split('').map((c, x) => <rect key={`${x}${y}`} x={10 + x * 7.5} y={9 + y * 7.5} width="7.6" height="7.6" fill={heatColor[c]} />))}
      <path d="M16 8V2H38V6M12 9V7H21V9M27 9V6H43V9M32 9V7H37V9M10 12H6V27H10M6 16H2V40H6M10 36H7V44H10" fill="none" stroke="#222" strokeWidth="1.5" />
    </>
  ),
  corr: (
    <>
      <rect x="1" y="1" width="46" height="46" fill="#fff" stroke="#333" strokeWidth="2" />
      <path d="M12 1V47M24 1V47M36 1V47M1 12H47M1 24H47M1 36H47" stroke="#ccc" strokeWidth="2" />
      {dotRows.map((row, y) => row.map(([r, c], x) => <circle key={`${x}${y}`} cx={6 + x * 12} cy={6 + y * 12} r={r} fill={c} />))}
    </>
  ),
  fit: (
    <>
      <rect width="48" height="48" fill="#9fc5e8" />
      <path d="M4 6V46H44" stroke="#fff" fill="none" strokeWidth="2" />
      <path d="M4 2L8 10H0ZM46 46L38 42V48Z" fill="#fff" />
      <path d="M6 43C28 40 40 34 43 6" stroke="#ff9fca" strokeWidth="3" fill="none" />
      {[[11, 42], [20, 40], [29, 37], [34, 28], [41, 20], [43, 7]].map(([x, y]) => <path key={x} d={`M${x} ${y - 3}l3 3l-3 3l-3-3z`} fill="#fff" />)}
    </>
  ),
  seq: (
    <>
      {[[0, 27, 26], [9, 35, 26], [17, 44, 27]].map(([x, y, h]) => {
        const d = `M${x + 1} ${y}H${x + 6}C${x + 11} ${y} ${x + 11} ${y - h} ${x + 15} ${y - h}C${x + 19} ${y - h} ${x + 19} ${y} ${x + 24} ${y}H${x + 30}`;
        return <g key={x} fill="none"><path d={d} stroke="#a9a4f5" strokeWidth="5" /><path d={d} stroke="#c8205a" strokeWidth="2" /></g>;
      })}
    </>
  ),
  pub: (
    <>
      <path d="M26 1H37L46 10V46H2V3H22L30 12V40" fill="#fff" stroke="#9cc49c" strokeWidth="2" />
      <path d="M5 12V35H22M7 24L13 19L18 23L23 17L28 19M7 31L13 26L19 29L25 24" fill="none" stroke="#9cc49c" strokeWidth="2" />
      <rect x="22" y="35" width="25" height="11" fill="#9cc49c" />
      <path d="M22 3L30 12H22ZM37 1L46 10H37Z" fill="#9cc49c" />
      <text x="24" y="44" fontSize="9" fontWeight="700" fill="#fff" fontFamily="Liberation Sans">PUB</text>
    </>
  ),
};

const apps = [
  ['add', ['添加App']],
  ['heat', ['Heat Map', 'with Den...']],
  ['corr', ['Correlation', 'Plot']],
  ['fit', ['Simple Fit'], true],
  ['seq', ['Sequential', 'Fit']],
  ['pub', ['Graph'], true],
];

/* ---- status bar ---- */

const StatusBar = styled.footer`
  flex: none;
  display: flex;
  align-items: center;
  height: 29px;
  padding-left: 47px;
  border-top: 1px solid #d0d0d4;
  background: #f0f0f0;
  font: 17px ${cjk};
`;

const StatusCell = styled.span`
  width: ${(p) => p.$width}px;
  margin-left: ${(p) => (p.$push ? 'auto' : 0)};
  padding: 2px 0 2px 4px;
  border-left: 1px solid #ccc;
  font-size: ${(p) => (p.$small ? 16 : 17)}px;
  line-height: 22px;
  white-space: nowrap;
`;

const Desktop = styled.div`
  flex: none;
  display: flex;
  height: 10px;
  overflow: hidden;
  background: linear-gradient(90deg, #e9ecec 0 30%, #e6ebec 80%, #c3d6dc 90%, #d5dfe2);
`;

const SearchEdge = styled.i`
  width: 431px;
  height: 10px;
  margin-left: 73px;
  border: 2px solid #ccc;
  border-bottom: 0;
  background: #fff;
`;

const Clock = styled.span`
  margin: 5px 114px 0 auto;
  font: 17px ${ui};
  line-height: 17px;
`;

const Badge = styled.svg`
  position: absolute;
  left: 1px;
  bottom: 10px;
`;

/* ---- dialog ---- */

const Dialog = styled.section`
  position: absolute;
  left: 332px;
  top: 157px;
  width: 1201px;
  display: flex;
  flex-direction: column;
  background: #fff;
  border: 1px solid #555;
  border-left: 0;
  box-shadow: 4px 6px 18px rgba(0, 0, 0, 0.35);
  color: #333;
`;

const DialogTitle = styled.div`
  display: flex;
  align-items: center;
  gap: 6px;
  height: 44px;
  padding: 0 26px 2px 11px;
  font-size: 18px;
  color: #000;
`;

const DialogBody = styled.div`
  display: flex;
`;

const FormSide = styled.form`
  flex: none;
  width: 721px;
  display: flex;
  flex-direction: column;
`;

const FormColumns = styled.div`
  display: flex;
  height: 613px;
`;

const ColumnPane = styled.div`
  flex: none;
  width: 216px;
  padding: 0 3px;
  background: #f7fbff;
`;

const SettingsPane = styled.div`
  flex: 1;
  padding: 0 3px;
`;

const Section = styled.fieldset`
  margin: 0;
  padding: 0;
  border: 0;
  border-top: 3px solid #005da6;
  > legend {
    margin-left: 13px;
    padding: 0 3px;
    font-weight: 600;
    font-size: 17px;
    line-height: 24px;
  }
`;

const ColumnButtons = styled.div`
  display: flex;
  gap: 5px;
  padding: 10px 14px 3px;
`;

const SmallButton = styled.button`
  width: ${(p) => p.$width}px;
  height: 24px;
  border: 2px solid #1e70b5;
  border-radius: 4px;
  background: #d6e8fc;
  color: #005da6;
  font: 700 14px ${cjk};
  &:disabled { color: #999; }
`;

const ColumnList = styled.ul`
  margin: 0;
  padding: 0 0 0 18px;
  list-style: none;
  li { display: flex; align-items: center; height: 30px; font-size: 18px; color: #444; }
  svg { margin-right: 11px; }
  b { margin-right: 8px; color: #333; }
  span { margin-left: 7px; }
`;

const Group = styled.fieldset`
  margin: ${(p) => p.$top}px 17px 0 16px;
  padding: 0 5px ${(p) => p.$bottom}px 13px;
  min-width: 0;
  border: 2px solid #1e70b5;
  > legend {
    padding: 0 3px;
    font-weight: 600;
    font-size: 16px;
    line-height: 22px;
  }
`;

const Row = styled.div`
  display: grid;
  grid-template-columns: 196px 1fr;
  align-items: center;
  min-height: ${(p) => p.$height || 24}px;
  margin-top: ${(p) => p.$top || 0}px;
  font-size: 17px;
  line-height: 24px;
  > :first-child { font-weight: 600; white-space: nowrap; }
`;

const Check = styled.label`
  display: flex;
  align-items: center;
  gap: 9px;
  margin: ${(p) => p.$margin || 0};
  font-size: ${(p) => p.$size || 17}px;
  line-height: 24px;
  white-space: nowrap;
  input {
    appearance: none;
    width: 19px;
    height: 19px;
    margin: 0;
    border: 2px solid #666;
    background: #fff;
  }
  input:checked {
    background: url("data:image/svg+xml,%3Csvg xmlns='http://www.w3.org/2000/svg' viewBox='0 0 15 15'%3E%3Cpath d='M1 7L5 12L14 1' fill='none' stroke='black' stroke-width='3'/%3E%3C/svg%3E");
  }
`;

const Radios = styled.div`
  display: flex;
  gap: 12px;
  padding-left: 6px;
`;

const Radio = styled.label`
  display: flex;
  align-items: center;
  gap: 10px;
  white-space: nowrap;
  input {
    appearance: none;
    width: 19px;
    height: 19px;
    margin: 0;
    border: 2px solid #666;
    border-radius: 50%;
    background: #fff;
  }
  input:checked { background: radial-gradient(#000 0 5px, #fff 6px); }
`;

const SelectBox = styled.span`
  display: flex;
  width: 215px;
  height: 42px;
  border: 3px solid;
  border-color: #696969 #696969 #e3e3e3 #696969;
  border-right-width: 2px;
  background: #fff;
  select {
    flex: 1;
    min-width: 0;
    appearance: none;
    border: 0;
    padding: 2px 3px 0;
    background: none;
    font: 15px ${mono};
    color: #444;
  }
  i {
    width: 28px;
    display: flex;
    align-items: center;
    justify-content: center;
    background: #f0f0f0;
    border: 2px solid #808080;
    pointer-events: none;
  }
`;

const LevelInput = styled.input`
  width: 220px;
  height: 42px;
  padding: 0 2px;
  border: 2px solid #808080;
  border-color: #808080 #e3e3e3 #e3e3e3 #696969;
  font: 17px ${mono};
  color: #000;
`;

const Hint = styled.p`
  margin: 9px 0 0;
  font-size: 15px;
  line-height: 21px;
  color: #1262a8;
`;

const DialogFooter = styled.div`
  display: flex;
  align-items: center;
  justify-content: flex-end;
  gap: 5px;
  height: 61px;
  padding: 0 1px 5px 0;
`;

const BigButton = styled.button`
  width: 96px;
  height: 48px;
  border-radius: 5px;
  background: #005da6;
  color: #d9ecff;
  font: 700 16px ${cjk};
  &:disabled { color: #9a9a9a; }
`;

const Preview = styled.div`
  flex: 1;
  margin: 15px 15px 14px 14px;
  border: 1px solid #666;
  background: #c0c0c0;
  svg { display: block; width: 100%; background: #fff; }
`;

const Mark = styled.div`
  position: absolute;
  left: ${(p) => p.$x}px;
  top: ${(p) => p.$y}px;
  width: ${(p) => p.$w}px;
  height: ${(p) => p.$h}px;
  border: 5px solid #ff2114;
  border-radius: 4px;
  pointer-events: none;
`;

const Select = ({ id, value, options }) => {
  const [v, setV] = useState(value);
  return (
    <SelectBox>
      <select id={id} value={v} onChange={(e) => setV(e.target.value)}>
        {options.map((o) => <option key={o}>{o}</option>)}
      </select>
      <i><svg width="18" height="12" viewBox="0 0 18 12"><path d="M1 2L9 10L17 2" fill="none" stroke="#000" strokeWidth="3" /></svg></i>
    </SelectBox>
  );
};

/* ---- correlation chart ---- */

const corr = [
  [-0.45, -3.53e-16, 0, 0.58, 0.39, 0.39, 0.48],
  [0, 0.45, -0.33, -0.097, -0.097, -0.77],
  [-0.79, 0.58, -0.75, -0.75, 0.22],
  [-0.29, 0.82, 0.82, -0.27],
  [0.082, 0.082, 0.78],
  [1, 0.27],
  [0.27],
];
const marks = ['03', '04', '05', '13', '14', '15', '24', '25', '34', '45', '56'];

const tint = (v) => {
  const a = Math.abs(v);
  const c = Math.round(255 * (1 - a));
  return v > 0 ? `rgb(255,${c},${c})` : `rgb(${c},${c},${Math.round(255 - 95 * a)})`;
};
const show = (v) => (v === 1 ? '1.0' : Math.abs(v) < 0.001 ? (v ? '-3.53E-16' : '') : String(v));

const x0 = 54;
const y0 = 40;
const cw = 38.25;
const ch = 30.75;

const Chart = () => (
  <svg viewBox="0 0 449 343" fontFamily={serif}>
    <defs>
      <linearGradient id="scale" x1="0" y1="0" x2="0" y2="1">
        <stop offset="0" stopColor="#f00" />
        <stop offset="0.5" stopColor="#fff" />
        <stop offset="1" stopColor="#0000a0" />
      </linearGradient>
    </defs>
    {[1, 2, 3, 4, 5, 6, 7].map((i) => (
      <path key={i} d={`M${x0 + i * cw} ${y0}v${ch * 8}M${x0} ${y0 + i * ch}h${cw * 8}`} stroke="#c0c0c0" />
    ))}
    <rect x={x0} y={y0} width={cw * 8} height={ch * 8} fill="none" stroke="#000" />
    {labels.map((l, i) => (
      <g key={l}>
        <text x="48" y={y0 + (i + 0.5) * ch + 4} textAnchor="end" fontSize="10">{l}</text>
        <text x={x0 + (i + 0.5) * cw} y={y0 + (i + 0.5) * ch + 2} textAnchor="middle" fontSize="8">{l}</text>
        <text transform={`translate(${x0 + (i + 0.5) * cw + 6} 299) rotate(-45)`} textAnchor="end" fontSize="10" fill="#444">{l}</text>
      </g>
    ))}
    {corr.map((row, r) => row.map((v, k) => {
      const c = r + 1 + k;
      const tiny = Math.abs(v) < 0.001;
      return (
        <g key={`${r}${c}`}>
          <circle cx={x0 + (r + 0.5) * cw} cy={y0 + (c + 0.5) * ch} r={14 * Math.sqrt(Math.abs(v))} fill={tint(v)} />
          <text x={x0 + (c + 0.5) * cw} y={y0 + (r + 0.5) * ch + 2} textAnchor="middle" fontSize={tiny ? 7 : 9} fill={tiny ? '#eee' : tint(v)}>{show(v)}</text>
          {marks.includes(`${r}${c}`) && <rect x={x0 + (c + 0.5) * cw} y={y0 + (r + 0.5) * ch - 1} width="1" height="1" />}
        </g>
      );
    }))}
    <text x={x0 + 5.5 * cw} y={y0 + 6.5 * ch + 4} textAnchor="middle" fontSize="9">**</text>
    <rect x="365" y="42" width="14" height="242" fill="url(#scale)" stroke="#000" />
    {[1, 0.8, 0.6, 0.4, 0.2, 0, -0.2, -0.4, -0.6, -0.8, -1].map((t, i) => (
      <g key={t}>
        <path d={`M379 ${42.5 + i * 24.2}h3`} stroke="#000" />
        <text x="385" y={44 + i * 24.2} fontSize="8" fill="#5a7080">{t}</text>
      </g>
    ))}
    <text x="0" y="341" fontSize="7" fontFamily={mono} xmlSpace="preserve">{'* p<=0.05  ** p<=0.01'}</text>
  </svg>
);

const CorrelationDialog = () => (
  <Dialog role="dialog" aria-label="Correlation Plot">
    <DialogTitle>
      <svg width="23" height="19" viewBox="0 0 23 19">
        <rect x="1" y="1" width="21" height="17" fill="#e6eaee" stroke="#8d98a4" />
        <rect x="3" y="3" width="9" height="13" fill="#3a8a80" />
        <rect x="13" y="3" width="4" height="10" fill="#fff" />
        <rect x="18" y="3" width="2" height="8" fill="#6ab48c" />
      </svg>
      Correlation Plot
      <WindowButtons $gap={54}>
        <button aria-label="Minimize"><svg width="16" height="16"><path d="M0 8.5H15" stroke="#ccc" /></svg></button>
        <button aria-label="Maximize"><svg width="16" height="16"><path d="M1.5 1.5H14.5V14.5H1.5Z" fill="none" stroke="#000" /></svg></button>
        <button aria-label="Close"><svg width="16" height="16"><path d="M1 1L15 15M15 1L1 15" stroke="#000" /></svg></button>
      </WindowButtons>
    </DialogTitle>
    <DialogBody>
      <FormSide onSubmit={(e) => e.preventDefault()}>
        <FormColumns>
          <ColumnPane>
            <Section>
              <legend>Input Columns</legend>
              <ColumnButtons>
                <SmallButton type="button" $width={88} disabled>Select All</SmallButton>
                <SmallButton type="button" $width={82}>Clear All</SmallButton>
              </ColumnButtons>
              <ColumnList>
                {labels.map((l, i) => (
                  <li key={l}>
                    <svg width="12" height="14" viewBox="0 0 12 14"><path d="M1 8L4 12L10 1" fill="none" stroke="#1a1aff" strokeWidth="1.5" /></svg>
                    <b>{'ABCDEFGH'[i]}</b>:<span>{l}</span>
                  </li>
                ))}
              </ColumnList>
            </Section>
          </ColumnPane>
          <SettingsPane>
            <Section>
              <legend>Settings</legend>
              <Check $margin="8px 0 0 20px"><input type="checkbox" />Use Different Variables for XY</Check>
              <Group $top={3} $bottom={15}>
                <legend>Statistics</legend>
                <Row $height={42} $top={13}>
                  <label htmlFor="type">Correlation Type</label>
                  <Select id="type" value="Pearson" options={['Pearson', 'Spearman', 'Kendall']} />
                </Row>
                <Row $top={9}>
                  <span>Exclude Missing Values</span>
                  <Radios>
                    <Radio><input type="radio" name="missing" defaultChecked />Pairwise</Radio>
                    <Radio><input type="radio" name="missing" />Listwise</Radio>
                  </Radios>
                </Row>
              </Group>
              <Group $top={15} $bottom={15}>
                <legend>Plot</legend>
                <Row $height={42} $top={12}>
                  <label htmlFor="method">Method</label>
                  <Select id="method" value="Mixed" options={['Mixed', 'Full']} />
                </Row>
                <Row $top={15}>
                  <span>Correlation Values in</span>
                  <Radios><Radio><input type="radio" name="values" />Lower Triangular</Radio></Radios>
                </Row>
                <Row $top={7}>
                  <span />
                  <Radios><Radio><input type="radio" name="values" defaultChecked />Upper Triangular</Radio></Radios>
                </Row>
                <Row $height={42} $top={12}>
                  <label htmlFor="lower">Lower Triangular</label>
                  <Select id="lower" value="Circle" options={['Circle', 'Ellipse']} />
                </Row>
                <Row $height={42} $top={8}>
                  <label htmlFor="label">Label</label>
                  <Select id="label" value="Significant Mark" options={['Significant Mark', 'None']} />
                </Row>
                <Row $height={42} $top={10}>
                  <label htmlFor="level">Significant Level</label>
                  <LevelInput id="level" defaultValue="0.05 0.01" />
                </Row>
                <Hint>Hint: Enter space-separated numbers for different levels, e.g. 0.05 0.01 0.001.</Hint>
              </Group>
            </Section>
          </SettingsPane>
        </FormColumns>
        <DialogFooter>
          <Check $size={20} $margin="0 29px 0 0"><input type="checkbox" defaultChecked />Auto Preview</Check>
          <BigButton type="button" disabled>Preview</BigButton>
          <BigButton>OK</BigButton>
          <BigButton type="button">Cancel</BigButton>
        </DialogFooter>
      </FormSide>
      <Preview><Chart /></Preview>
    </DialogBody>
  </Dialog>
);

const App = () => (
  <Screen>
    <GlobalStyle />
    <TitleBar>
      <svg width="24" height="28" viewBox="0 0 24 28">
        <path d="M5 1H23V22H5ZM11 1V22M17 1V22M5 8H23M5 15H23" fill="#e7f1fa" stroke="#a9cbe6" />
        <circle cx="10" cy="17" r="9" fill="#e8624a" />
        <circle cx="9" cy="14" r="6" fill="#f6a08e" />
        <path d="M3 21L8 12L11 18L16 10" fill="none" stroke="#a02018" strokeWidth="1.5" />
      </svg>
      {'test.opju * - C:\\Users\\wy\\Desktop\\ - /Folder1/ - OriginPro 2022'}
      <WindowButtons $gap={54}>
        <button aria-label="Minimize"><svg width="16" height="16"><path d="M0 8.5H15" stroke="#888" /></svg></button>
        <button aria-label="Restore"><svg width="16" height="16"><path d="M1.5 4.5H11.5V15.5H1.5ZM4.5 4.5V1.5H14.5V12.5H11.5" fill="none" stroke="#888" /></svg></button>
        <button aria-label="Close"><svg width="16" height="16"><path d="M1 1L15 15M15 1L1 15" stroke="#888" /></svg></button>
      </WindowButtons>
    </TitleBar>
    <MenuBar>
      <Grip />
      <svg width="24" height="23" viewBox="0 0 24 23">
        <rect width="24" height="23" />
        <rect x="2" y="2" width="19" height="4" fill="#fff" />
        <path d="M3 4h4M9 4h4M16 4h4" stroke="#f00" strokeWidth="3" />
        {[7, 12, 17].map((y) => <path key={y} d={`M2 ${y + 2}h6M9 ${y + 2}h6M16 ${y + 2}h5`} stroke="#28e04c" strokeWidth="4" />)}
        {[9, 14, 19].map((y) => <path key={y} d={`M3 ${y}h4M10 ${y}h4M17 ${y}h3`} stroke="#fff" />)}
      </svg>
      {menus.map(([name, key], i) => <MenuItem key={name} $gap={i ? 16 : 12}>{name}(<u>{key}</u>)</MenuItem>)}
      <WindowButtons $gap={16}>
        <button aria-label="Minimize sheet"><svg width="9" height="11"><path d="M1 9H7" stroke="#000" strokeWidth="2" /></svg></button>
        <button aria-label="Restore sheet"><svg width="9" height="11"><path d="M1.5 5.5H6.5V10.5H1.5ZM3.5 5V1.5H8.5V7.5H6.5M3 2.5H8" fill="none" stroke="#000" /></svg></button>
        <button aria-label="Close sheet"><svg width="9" height="11"><path d="M1 2L8 9M8 2L1 9" stroke="#000" strokeWidth="2" /></svg></button>
      </WindowButtons>
    </MenuBar>
    <ToolRow>{row1.map((items, i) => <ToolBar key={i} items={items} />)}</ToolRow>
    <ToolRow>{row2.map((items, i) => <ToolBar key={i} items={items} />)}</ToolRow>

    <Main>
      <LeftTabs>
        <DockTab $height={160}>项目管理器 (1)</DockTab>
        <DockTab>消息日志</DockTab>
        <DockTab>提示日志</DockTab>
      </LeftTabs>
      <SideBars $width={37}>
        <SideTools items={leftTools[0]} width={35} />
        <SideTools items={leftTools[1]} width={26} />
      </SideBars>

      <Center>
        <Workspace>
          <SheetArea>
            <SheetView><Worksheet /></SheetView>
            <TabStrip>
              <Tabs>
                <NavButton aria-label="Previous sheet"><svg width="8" height="10"><path d="M6 0V10L0 5Z" fill="#444" /></svg></NavButton>
                <NavButton aria-label="Next sheet"><svg width="8" height="10"><path d="M1 0V10L7 5Z" fill="#444" /></svg></NavButton>
                <Slash d="M2 0L8 26" right={['M2 0H8V26Z', '#fff']} />
                <SheetTab $active>Sheet1</SheetTab>
                <Slash d="M8 0L1 26M4 12L8 26" left={['M0 0H8L1 26H0Z', '#fff']} right={['M8 0V26L4 12Z', '#efefef']} />
                <SheetTab>StackCols1</SheetTab>
                <Slash d="M7 0L1 26" left={['M0 0H7L1 26H0Z', '#efefef']} />
              </Tabs>
              <HScroll><ScrollArrow dir="left" /><Thumb /><ScrollArrow dir="right" /></HScroll>
            </TabStrip>
          </SheetArea>
          <VScroll>
            <ScrollArrow dir="up" />
            <Thumb $rest={116} />
            <ScrollArrow dir="down" />
            <SizeGrip>
              <svg width="12" height="12"><path d="M9 0h3v3h-3zM5 4h3v3h-3zM9 4h3v3h-3zM1 8h3v3h-3zM5 8h3v3h-3zM9 8h3v3h-3z" fill="#bbb" /></svg>
            </SizeGrip>
          </VScroll>
        </Workspace>
        <ToolRow $height={35}>
          {bottomRow.map((items, i) => <ToolBar key={i} items={items} gap={i === 3 ? 33 : 0} />)}
        </ToolRow>
      </Center>

      <SideBars $width={30}>
        <SideTools items={rightTools[0]} width={26} />
        <SideTools items={rightTools[1]} width={26} />
      </SideBars>

      <Panels>
        <PanelTitle>对象管理器</PanelTitle>
        <Tree>
          <TreeItem $root>
            <svg width="17" height="17"><rect x="0.5" y="0.5" width="16" height="16" fill="#ececec" stroke="#888" /><path d="M3 8.5H14" stroke="#2a50a8" strokeWidth="2" /></svg>
            <svg width="24" height="18" viewBox="0 0 24 18"><path d="M1 16V2H8L10 4H19V8" fill="#d8a93a" stroke="#8a6a1c" /><path d="M1 16L6 7H23L18 16Z" fill="#ffd35a" stroke="#9a7418" /></svg>
            Book1
          </TreeItem>
          <TreeItem $selected>
            <svg width="30" height="30"><path d="M0.5 0V30M0 14.5H14" stroke="#999" strokeDasharray="1 2" /></svg>
            Sheet1
          </TreeItem>
          <TreeItem>
            <svg width="30" height="30"><path d="M0.5 0V14M0 14.5H14" stroke="#999" strokeDasharray="1 2" /></svg>
            StackCols1
          </TreeItem>
        </Tree>
        <PanelTitle>Apps</PanelTitle>
        <AppsBody>
          <AppTabs>
            <StepButtons>
              {['M0 1H8M4 3L7 6H1Z', 'M4 1L8 5H0Z', 'M4 5L0 1H8Z', 'M0 6H8M4 4L1 1H7Z'].map((d) => (
                <button key={d} aria-label="Scroll tabs"><svg width="8" height="7"><path d={d} stroke="#000" /></svg></button>
              ))}
            </StepButtons>
            <AppTab $active $height={72}>
              <svg width="30" height="72"><path d="M30 6L1 20V54L30 68Z" fill="#fff" /><path d="M30 6L1 20V54L30 68" fill="none" stroke="#999" /></svg>
              所有
            </AppTab>
            <AppTab $height={86}>
              <svg width="30" height="86"><path d="M16 3L1 11V62L30 78" fill="#f0f0f0" stroke="#999" /></svg>
              连接器
            </AppTab>
          </AppTabs>
          <AppList>
            {apps.map(([icon, lines, off]) => (
              <AppItem key={icon} $off={off}>
                <svg width="48" height="48" viewBox="0 0 48 48">{appIcons[icon]}</svg>
                {lines.map((l) => <span key={l}>{l}</span>)}
              </AppItem>
            ))}
          </AppList>
          <VScroll $pad={4}>
            <ScrollArrow dir="up" />
            <Thumb $rest={330} />
            <ScrollArrow dir="down" />
          </VScroll>
        </AppsBody>
      </Panels>
    </Main>

    <StatusBar>
      <span>i=4</span>
      <StatusCell $push $width={280}>平均值=1.416 求和=56.64 计数=40</StatusCell>
      <StatusCell $width={176}>AU : 开</StatusCell>
      <StatusCell $small $width={65}>(8x32) 5</StatusCell>
      <StatusCell $small $width={180}>[Book1]Sheet1!1[1]:8[5]</StatusCell>
      <StatusCell $width={41}>弧度</StatusCell>
    </StatusBar>
    <Desktop>
      <SearchEdge />
      <Clock>10:10</Clock>
    </Desktop>
    <Badge width="44" height="47" viewBox="0 0 44 47">
      <circle cx="18" cy="29" r="17" fill="#e2a494" stroke="#b06a58" />
      <path d="M31 29L42 40" stroke="#3a62e0" strokeWidth="6" />
      <circle cx="21" cy="18" r="14" fill="#b9c6f4" fillOpacity="0.9" stroke="#2266ee" strokeWidth="4" />
      <path d="M9 14C15 8 26 8 33 14" fill="none" stroke="#d0a0c0" strokeWidth="2" />
      <path d="M19 27L23 18L27 24L31 15" fill="none" stroke="#3a72c8" strokeWidth="1.5" />
    </Badge>

    <CorrelationDialog />
    <Mark $x={723} $y={270} $w={316} $h={83} />
    <Mark $x={723} $y={421} $w={301} $h={74} />
    <Mark $x={733} $y={549} $w={292} $h={156} />
    <Mark $x={514} $y={790} $w={215} $h={83} />
  </Screen>
);

export default App;
